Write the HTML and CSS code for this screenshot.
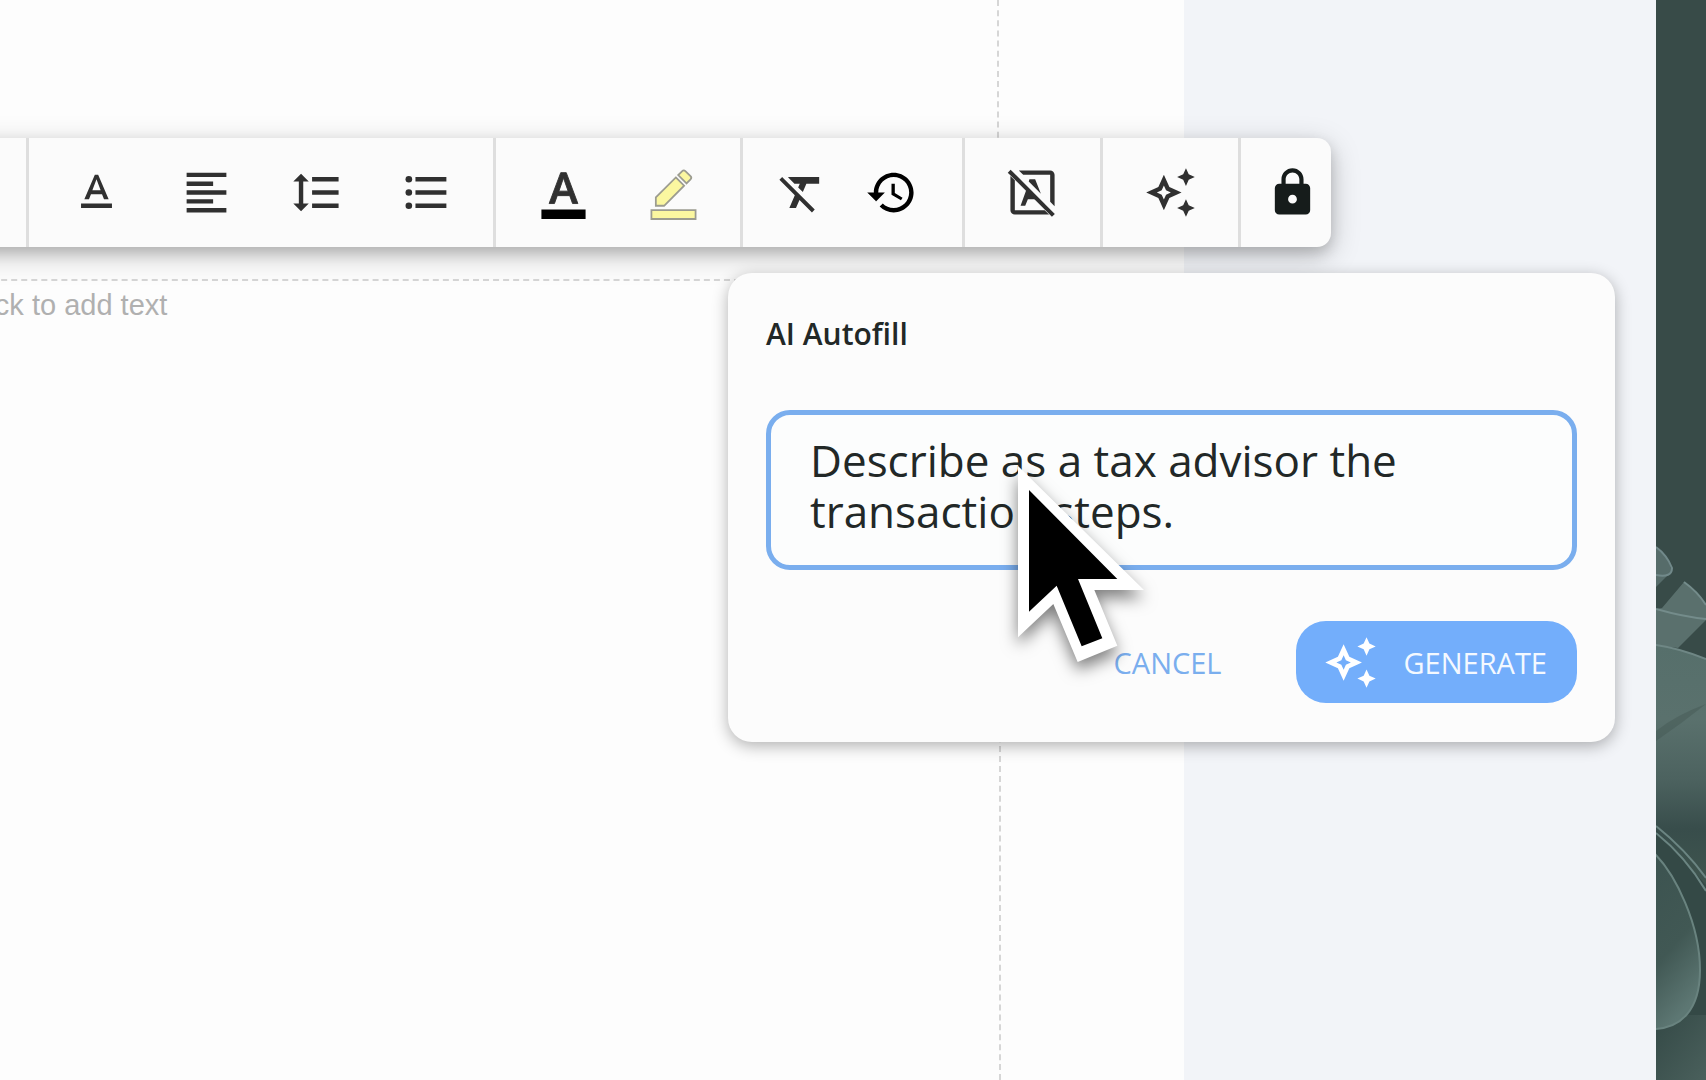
FILE: index.html
```html
<!DOCTYPE html>
<html lang="en">
<head>
    <meta charset="UTF-8">
    <meta name="viewport" content="width=device-width, initial-scale=1.0">
    <title>AI Autofill</title>
    <link rel="stylesheet" href="styles.css">
</head>
<body>

<div class="desktop">
    <main class="workspace">
        <div class="page">
            <div class="placeholder placeholder-title"></div>
            <div class="placeholder placeholder-body">Click to add text</div>
        </div>

        <div class="toolbar" role="toolbar" aria-label="Text formatting">
            <div class="group group-text">
                <button type="button" class="tool" aria-label="Text format">
                    <svg class="icon" viewBox="0 0 24 24"><path d="M5 17v2h14v-2H5zm4.5-4.2h5l.9 2.2h2.1L12.75 4h-1.5L6.5 15h2.1l.9-2.2zM12 5.98L13.87 11h-3.74L12 5.98z"/></svg>
                </button>
                <button type="button" class="tool" aria-label="Align left">
                    <svg class="icon" viewBox="0 0 24 24"><path d="M15 15H3v2h12v-2zm0-8H3v2h12V7zM3 13h18v-2H3v2zm0 8h18v-2H3v2zM3 3v2h18V3H3z"/></svg>
                </button>
                <button type="button" class="tool" aria-label="Line spacing">
                    <svg class="icon" viewBox="0 0 24 24"><path d="M6 7h2.5L5 3.5 1.5 7H4v10H1.5L5 20.5 8.5 17H6V7zm4-2v2h12V5H10zm0 14h12v-2H10v2zm0-6h12v-2H10v2z"/></svg>
                </button>
                <button type="button" class="tool" aria-label="Bulleted list">
                    <svg class="icon" viewBox="0 0 24 24"><circle cx="4" cy="6" r="1.5"/><circle cx="4" cy="12" r="1.5"/><circle cx="4" cy="18" r="1.5"/><path d="M7 5h14v2H7zM7 11h14v2H7zM7 17h14v2H7z"/></svg>
                </button>
            </div>
            <div class="group group-text">
                <button type="button" class="tool" aria-label="Text color">
                    <svg class="icon icon-color" viewBox="0 0 24 24"><path class="bar" d="M2 19.700h20v4.300H2z"/><path stroke="#303030" stroke-width=".4" d="M5.49 17h2.42l1.27-3.58h5.65L16.09 17h2.42L13.25 3h-2.5L5.49 17zm4.42-5.61l2.03-5.79h.12l2.03 5.79H9.91z"/></svg>
                </button>
                <button type="button" class="tool" aria-label="Highlight color">
                    <svg class="icon icon-highlight" viewBox="0 0 24 24"><path d="M22 24H2v-4h20v4zM13.06 5.19l3.75 3.75L7.75 18H4v-3.75l9.06-9.06zm4.82 2.68l-3.75-3.75 1.83-1.83c.39-.39 1.02-.39 1.41 0l2.34 2.34c.39.39.39 1.02 0 1.41l-1.83 1.83z"/></svg>
                </button>
            </div>
            <div class="group group-history">
                <button type="button" class="tool" aria-label="Clear formatting">
                    <svg class="icon" viewBox="0 0 24 24"><path d="M3.27 5L2 6.27l6.97 6.97L6.5 19h3l1.57-3.66L16.73 21 18 19.73 3.55 5.27 3.27 5zM6 5v.18L8.82 8h2.4l-.72 1.68 2.1 2.1L14.21 8H20V5H6z"/></svg>
                </button>
                <button type="button" class="tool" aria-label="History">
                    <svg class="icon icon-history" viewBox="0 0 24 24"><path d="M13 3c-4.97 0-9 4.03-9 9H1l3.89 3.89.07.14L9 12H6c0-3.87 3.13-7 7-7s7 3.13 7 7-3.13 7-7 7c-1.93 0-3.68-.79-4.94-2.06l-1.42 1.42C8.27 19.99 10.51 21 13 21c4.97 0 9-4.03 9-9s-4.03-9-9-9zm-1 5v5l4.28 2.54.72-1.21-3.5-2.08V8H12z"/></svg>
                </button>
            </div>
            <div class="group group-single">
                <button type="button" class="tool" aria-label="No text style">
                    <svg class="icon" viewBox="0 0 24 24">
                        <path d="M5.800 2H20c1.100 0 2 .9 2 2v14.200l-2-2V4H7.800zM2 4.500l2 2V20h13.500l2 2H4c-1.100 0-2-.9-2-2z"/>
                        <path d="M10.600 6h2.600l2.600 6.600L10.300 7zM9.300 10.500l4.500 4.500H9.900l-1.200 3H6.600z"/>
                        <path d="M2.100 1.700L22.100 21.700l-1.300 1.300L.8 3z"/>
                    </svg>
                </button>
            </div>
            <div class="group group-single">
                <button type="button" class="tool" aria-label="AI Autofill">
                    <svg class="icon" viewBox="0 0 24 24"><path d="M19 9l1.250-2.750L23 5l-2.750-1.250L19 1l-1.250 2.750L15 5l2.750 1.250L19 9zm0 6l-1.250 2.750L15 19l2.750 1.250L19 23l1.250-2.750L23 19l-2.750-1.250L19 15zm-7.500-5.500L9 4 6.500 9.500 1 12l5.500 2.500L9 20l2.500-5.500L17 12l-5.500-2.500zm-1.510 3.490L9 15.170l-.99-2.180L5.830 12l2.180-.99L9 8.830l.99 2.180 2.180.99-2.180.99z"/></svg>
                </button>
            </div>
            <div class="group group-lock">
                <button type="button" class="tool" aria-label="Lock">
                    <svg class="icon icon-lock" viewBox="0 0 24 24"><path d="M18 8h-1V6c0-2.760-2.240-5-5-5S7 3.240 7 6v2H6c-1.100 0-2 .9-2 2v10c0 1.100.9 2 2 2h12c1.100 0 2-.9 2-2V10c0-1.100-.9-2-2-2zm-6 9c-1.100 0-2-.9-2-2s.9-2 2-2 2 .9 2 2-.9 2-2 2zm3.100-9H8.900V6c0-1.710 1.390-3.100 3.100-3.100s3.100 1.390 3.100 3.100v2z"/></svg>
                </button>
            </div>
        </div>

        <form class="autofill">
            <label class="autofill-title" for="prompt">AI Autofill</label>
            <textarea class="prompt" id="prompt" rows="2" spellcheck="false">Describe as a tax advisor the transaction steps.</textarea>
            <div class="actions">
                <button type="button" class="btn">CANCEL</button>
                <button type="button" class="btn btn-primary">
                    <svg class="icon" viewBox="0 0 24 24"><path d="M19 9l1.250-2.750L23 5l-2.750-1.250L19 1l-1.250 2.750L15 5l2.750 1.250L19 9zm0 6l-1.250 2.750L15 19l2.750 1.250L19 23l1.250-2.750L23 19l-2.750-1.250L19 15zm-7.500-5.500L9 4 6.500 9.500 1 12l5.500 2.500L9 20l2.500-5.500L17 12l-5.500-2.500zm-1.510 3.490L9 15.170l-.99-2.180L5.830 12l2.180-.99L9 8.830l.99 2.180 2.180.99-2.180.99z"/></svg>
                    GENERATE
                </button>
            </div>
            <svg class="pointer" viewBox="174 78 381 591" aria-hidden="true">
                <path fill="#fff" d="M174 78L552 450H403L472 617 353 666 280 492 174 592z"/>
                <path d="M207 150L472 417H354L427 595 365 619 290 437 207 515z"/>
            </svg>
        </form>
    </main>

    <svg class="wallpaper" viewBox="0 0 50 1080" preserveAspectRatio="none" aria-hidden="true">
        <defs>
            <linearGradient id="fold" x1="0" y1="0" x2="0" y2="1">
                <stop offset="0" stop-color="#566f6b"/>
                <stop offset=".3" stop-color="#5a716d"/>
                <stop offset=".55" stop-color="#4c625f"/>
                <stop offset=".75" stop-color="#384d4b"/>
                <stop offset="1" stop-color="#40564f"/>
            </linearGradient>
            <linearGradient id="petal" x1="0" y1="0" x2=".3" y2="1">
                <stop offset="0" stop-color="#3c5350"/>
                <stop offset=".6" stop-color="#415854"/>
                <stop offset="1" stop-color="#5d7773"/>
            </linearGradient>
            <linearGradient id="floor" x1="0" y1="0" x2="1" y2="1">
                <stop offset="0" stop-color="#344946"/>
                <stop offset="1" stop-color="#4a605c"/>
            </linearGradient>
        </defs>
        <path fill="#384b48" d="M0 0h50v1080H0z"/>
        <path fill="#566c6a" d="M0 547Q11 555 16 571L0 587z"/>
        <path fill="none" stroke="#71898a" stroke-width="2" d="M0 547Q11 555 16 568Q16 578 0 575"/>
        <path fill="#5a706d" d="M6 608L28 582Q42 592 50 605V620L22 648 0 645V609z"/>
        <path fill="none" stroke="#748c8b" stroke-width="2" d="M0 609Q28 617 50 619M28 582Q42 592 50 605"/>
        <path fill="url(#fold)" d="M0 645Q22 648 50 659V890L0 830z"/>
        <path fill="#40544f" opacity=".4" d="M0 731Q20 715 50 704Q25 724 0 741z"/>
        <path fill="none" stroke="#6f8785" stroke-width="2" d="M0 645Q22 648 50 659"/>
        <path fill="#344946" d="M0 830L50 885V1080H0z"/>
        <path fill="none" stroke="#6b8582" stroke-width="2" d="M0 826Q30 850 50 878M0 833Q30 857 50 891"/>
        <path fill="url(#floor)" d="M0 1015H50V1080H0z"/>
        <path fill="url(#petal)" stroke="#69837f" stroke-width="2" d="M-2 853C20 875 44 925 44 970C44 1010 25 1028 -2 1029z"/>
    </svg>
</div>

</body>
</html>
```
FILE: styles.css
```css
* {
    box-sizing: border-box;
}
body {
    margin: 0;
    font-family: "Open Sans", sans-serif;
    color: #222827;
    overflow: hidden;
}
button {
    font: inherit;
    border: none;
    background: none;
    cursor: pointer;
}
.desktop {
    display: flex;
    height: 100vh;
}
.wallpaper {
    flex: 0 0 50px;
    width: 50px;
    height: 100%;
}
.workspace {
    position: relative;
    flex: 1;
    display: flex;
    padding-right: 472px;
    background-color: #f2f4f8;
    overflow: hidden;
}

/* slide page, scrolled slightly past the left edge */
.page {
    flex: 1;
    display: flex;
    flex-direction: column;
    gap: 40px;
    margin-left: -39px;
    padding-right: 183px;
    background-color: #fdfdfd;
}
.placeholder {
    border: 2px dashed #d6d6d6;
    border-left: none;
}
.placeholder-title {
    height: 239px;
    margin-right: 2px;
    border-top: none;
}
.placeholder-body {
    flex: 1;
    padding-top: 8px;
    border-bottom: none;
    font-family: "Liberation Sans", sans-serif;
    font-size: 29px;
    line-height: 32px;
    color: #b0b0b0;
}

/* toolbar */
.toolbar {
    position: absolute;
    top: 138px;
    left: -40px;
    right: 325px;
    height: 109px;
    display: flex;
    justify-content: flex-end;
    background-color: #fbfbfb;
    border-radius: 14px;
    box-shadow: 0 8px 30px rgba(0, 0, 0, 0.22), 0 6px 14px rgba(0, 0, 0, 0.16);
}
.group {
    display: flex;
    border-left: 3px solid #dedede;
}
.group-text {
    padding: 0 12px;
}
.group-history {
    padding: 0 26px 0 13px;
}
.group-lock {
    padding-left: 12px;
}
.tool {
    display: flex;
    align-items: center;
    justify-content: center;
    width: 110px;
    padding: 0;
}
.group-history .tool {
    width: 90px;
}
.group-single .tool {
    width: 135px;
}
.group-lock .tool {
    width: 78px;
}
.icon {
    width: 53px;
    height: 53px;
    fill: #303030;
}
.icon-color .bar,
.icon-history {
    fill: #000;
}
.icon-highlight {
    fill: #fbf7a0;
    stroke: #9c9c90;
    stroke-width: 0.8;
    overflow: visible;
}
.icon-lock {
    fill: #161c1b;
}

/* autofill popup */
.autofill {
    position: absolute;
    top: 273px;
    right: 41px;
    width: 887px;
    display: flex;
    flex-direction: column;
    padding: 41px 38px 39px 38px;
    background-color: #fcfcfc;
    border-radius: 24px;
    box-shadow: 0 4px 16px rgba(0, 0, 0, 0.3);
}
.autofill-title {
    margin-bottom: 56px;
    font-size: 30px;
    font-weight: 600;
    line-height: 40px;
}
.prompt {
    height: 160px;
    margin: 0 0 51px;
    padding: 20px 39px;
    border: 5px solid #7aaeee;
    border-radius: 24px;
    outline: none;
    resize: none;
    overflow: hidden;
    background-color: #fcfdfd;
    color: inherit;
    font-family: inherit;
    font-size: 44px;
    line-height: 51px;
}
.actions {
    display: flex;
    justify-content: flex-end;
    gap: 44px;
}
.btn {
    display: flex;
    align-items: center;
    height: 82px;
    padding: 0 30px;
    border-radius: 30px;
    font-size: 29px;
    color: #7aaeee;
}
.btn-primary {
    gap: 26px;
    padding-left: 27px;
    background-color: #73aefb;
    color: #f4f9ff;
}
.btn-primary .icon {
    width: 55px;
    height: 55px;
    fill: #fff;
}

.pointer {
    position: absolute;
    top: 193px;
    left: 290px;
    width: 127px;
    height: 197px;
    overflow: visible;
    pointer-events: none;
    filter: drop-shadow(0 8px 8px rgba(0, 0, 0, 0.5));
}
```
